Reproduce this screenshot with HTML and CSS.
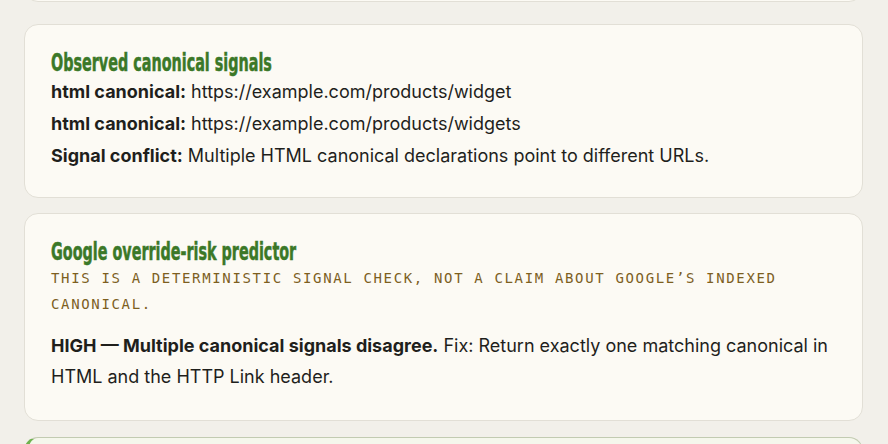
FILE: index.html
```html
<!DOCTYPE html>
<html lang="en">
<head>
    <meta charset="UTF-8">
    <meta name="viewport" content="width=device-width, initial-scale=1.0">
    <title>Canonical signal report</title>
    <link rel="stylesheet" href="styles.css">
</head>
<body>
    <div class="card card-prev"></div>

    <section class="card">
        <h3 class="card-title"><span>Observed canonical signals</span></h3>
        <p class="signal"><strong>html canonical:</strong> https://example.com/products/widget</p>
        <p class="signal"><strong>html canonical:</strong> https://example.com/products/widgets</p>
        <p class="signal"><strong>Signal conflict:</strong> Multiple HTML canonical declarations point to different URLs.</p>
    </section>

    <section class="card">
        <h3 class="card-title"><span>Google override-risk predictor</span></h3>
        <p class="note">This is a deterministic signal check, not a claim about Google’s indexed canonical.</p>
        <p class="verdict"><strong>HIGH — Multiple canonical signals disagree.</strong> Fix: Return exactly one matching canonical in HTML and the HTTP Link header.</p>
    </section>

    <section class="card card-ok"></section>
</body>
</html>
```

FILE: styles.css
```css
body {
    margin: 0;
    padding: 0 25px 0 24px;
    background-color: #f2f0ea;
    font-family: "Inter", "Open Sans", sans-serif;
    color: #1f1f1c;
}

.card {
    background-color: #fcfaf4;
    border: 1px solid #e2dfd6;
    border-radius: 14px;
    padding: 25px 26px;
    margin-bottom: 15px;
}

/* tail end of the card above the fold */
.card-prev {
    height: 40px;
    padding: 0;
    margin-top: -40px;
    margin-bottom: 22px;
}

.card-title {
    margin: 0;
    font-family: "DejaVu Sans Condensed", "DejaVu Sans", sans-serif;
    font-weight: 700;
    font-size: 24px;
    line-height: 26px;
    color: #3b7828;
    white-space: nowrap;
    -webkit-text-stroke: 0.5px #3b7828;
}

/* squeeze the heading to a tall, narrow display face */
.card-title span {
    display: inline-block;
    transform: scaleX(0.665);
    transform-origin: left center;
}

.signal {
    margin: 0;
    font-size: 18px;
    line-height: 32px;
}

.signal strong,
.verdict strong {
    font-weight: 700;
}

.note {
    margin: 0 0 13px 0;
    font-family: "DejaVu Sans Mono", "Liberation Mono", monospace;
    font-size: 14px;
    line-height: 26px;
    letter-spacing: 1.65px;
    text-transform: uppercase;
    color: #7d5f1f;
}

.verdict {
    margin: 0 0 3px 0;
    font-size: 18px;
    line-height: 31px;
}

.card-ok {
    margin-top: 16px;
    background-color: #f5f7ec;
    border-color: #c2cbb1;
    border-left: 4px solid #6eb24e;
    height: 60px;
}
```
